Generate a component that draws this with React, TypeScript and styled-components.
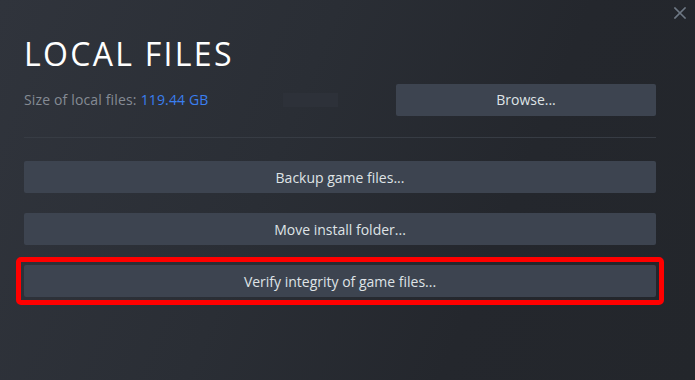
import React from "react";
import styled, { createGlobalStyle } from "styled-components";

const Global = createGlobalStyle`
  html, body { margin: 0; padding: 0; background: #262a30; }
  #root { width: 695px; height: 380px; }
`;

const Dialog = styled.div`
  position: relative;
  box-sizing: border-box;
  width: 695px;
  height: 380px;
  padding: 36px 39px 0 24px;
  background: linear-gradient(112deg, #30343c 0%, #2a2e35 40%, #24272d 70%, #23262b 100%);
  font-family: "Open Sans", "Noto Sans", sans-serif;
  display: flex;
  flex-direction: column;
`;

const Close = styled.button`
  position: absolute;
  top: 6px;
  right: 8px;
  width: 14px;
  height: 14px;
  padding: 0;
  border: none;
  background: transparent;
  display: flex;
  align-items: center;
  justify-content: center;
`;

const Title = styled.h1`
  margin: 0;
  font-size: 32px;
  font-weight: 400;
  letter-spacing: 2.3px;
  color: #ffffff;
  line-height: 36px;
`;

const SizeRow = styled.div`
  margin-top: 12px;
  display: flex;
  align-items: center;
  justify-content: space-between;
  height: 31px;
`;

const SizeInfo = styled.div`
  display: flex;
  align-items: center;
  font-size: 14px;
  letter-spacing: 0.15px;
  color: #858b94;
`;

const SizeValue = styled.span`
  color: #3a7ff0;
  margin-left: 4px;
`;

const Redacted = styled.span`
  display: inline-block;
  width: 55px;
  height: 14px;
  margin-left: 74px;
  background: #2d3139;
`;

const Button = styled.button<{ $width?: string }>`
  box-sizing: border-box;
  width: ${(p) => p.$width ?? "100%"};
  height: 32px;
  border: none;
  border-radius: 2px;
  background: #3d4450;
  color: #dfe3e6;
  font-family: "Open Sans", "Noto Sans", sans-serif;
  font-size: 14px;
  padding: 0;
  display: flex;
  align-items: center;
  justify-content: center;
`;

const Divider = styled.div`
  margin-top: 22px;
  height: 1px;
  background: #373c44;
`;

const Actions = styled.div`
  margin-top: 23px;
  display: flex;
  flex-direction: column;
  gap: 20px;
`;

const Highlight = styled.div`
  margin: -8px -8px 0 -8px;
  padding: 3px;
  border: 5px solid #ff0000;
  border-radius: 5px;
`;

export default function App() {
  return (
    <>
      <Global />
      <Dialog>
        <Close aria-label="Close">
          <svg width="12" height="12" viewBox="0 0 12 12">
            <path d="M1 1 L11 11 M11 1 L1 11" stroke="#6e7884" strokeWidth="1.6" strokeLinecap="square" />
          </svg>
        </Close>
        <Title>LOCAL FILES</Title>
        <SizeRow>
          <SizeInfo>
            Size of local files:<SizeValue>119.44 GB</SizeValue>
            <Redacted />
          </SizeInfo>
          <Button $width="260px">Browse...</Button>
        </SizeRow>
        <Divider />
        <Actions>
          <Button>Backup game files...</Button>
          <Button>Move install folder...</Button>
          <Highlight>
            <Button>Verify integrity of game files...</Button>
          </Highlight>
        </Actions>
      </Dialog>
    </>
  );
}
